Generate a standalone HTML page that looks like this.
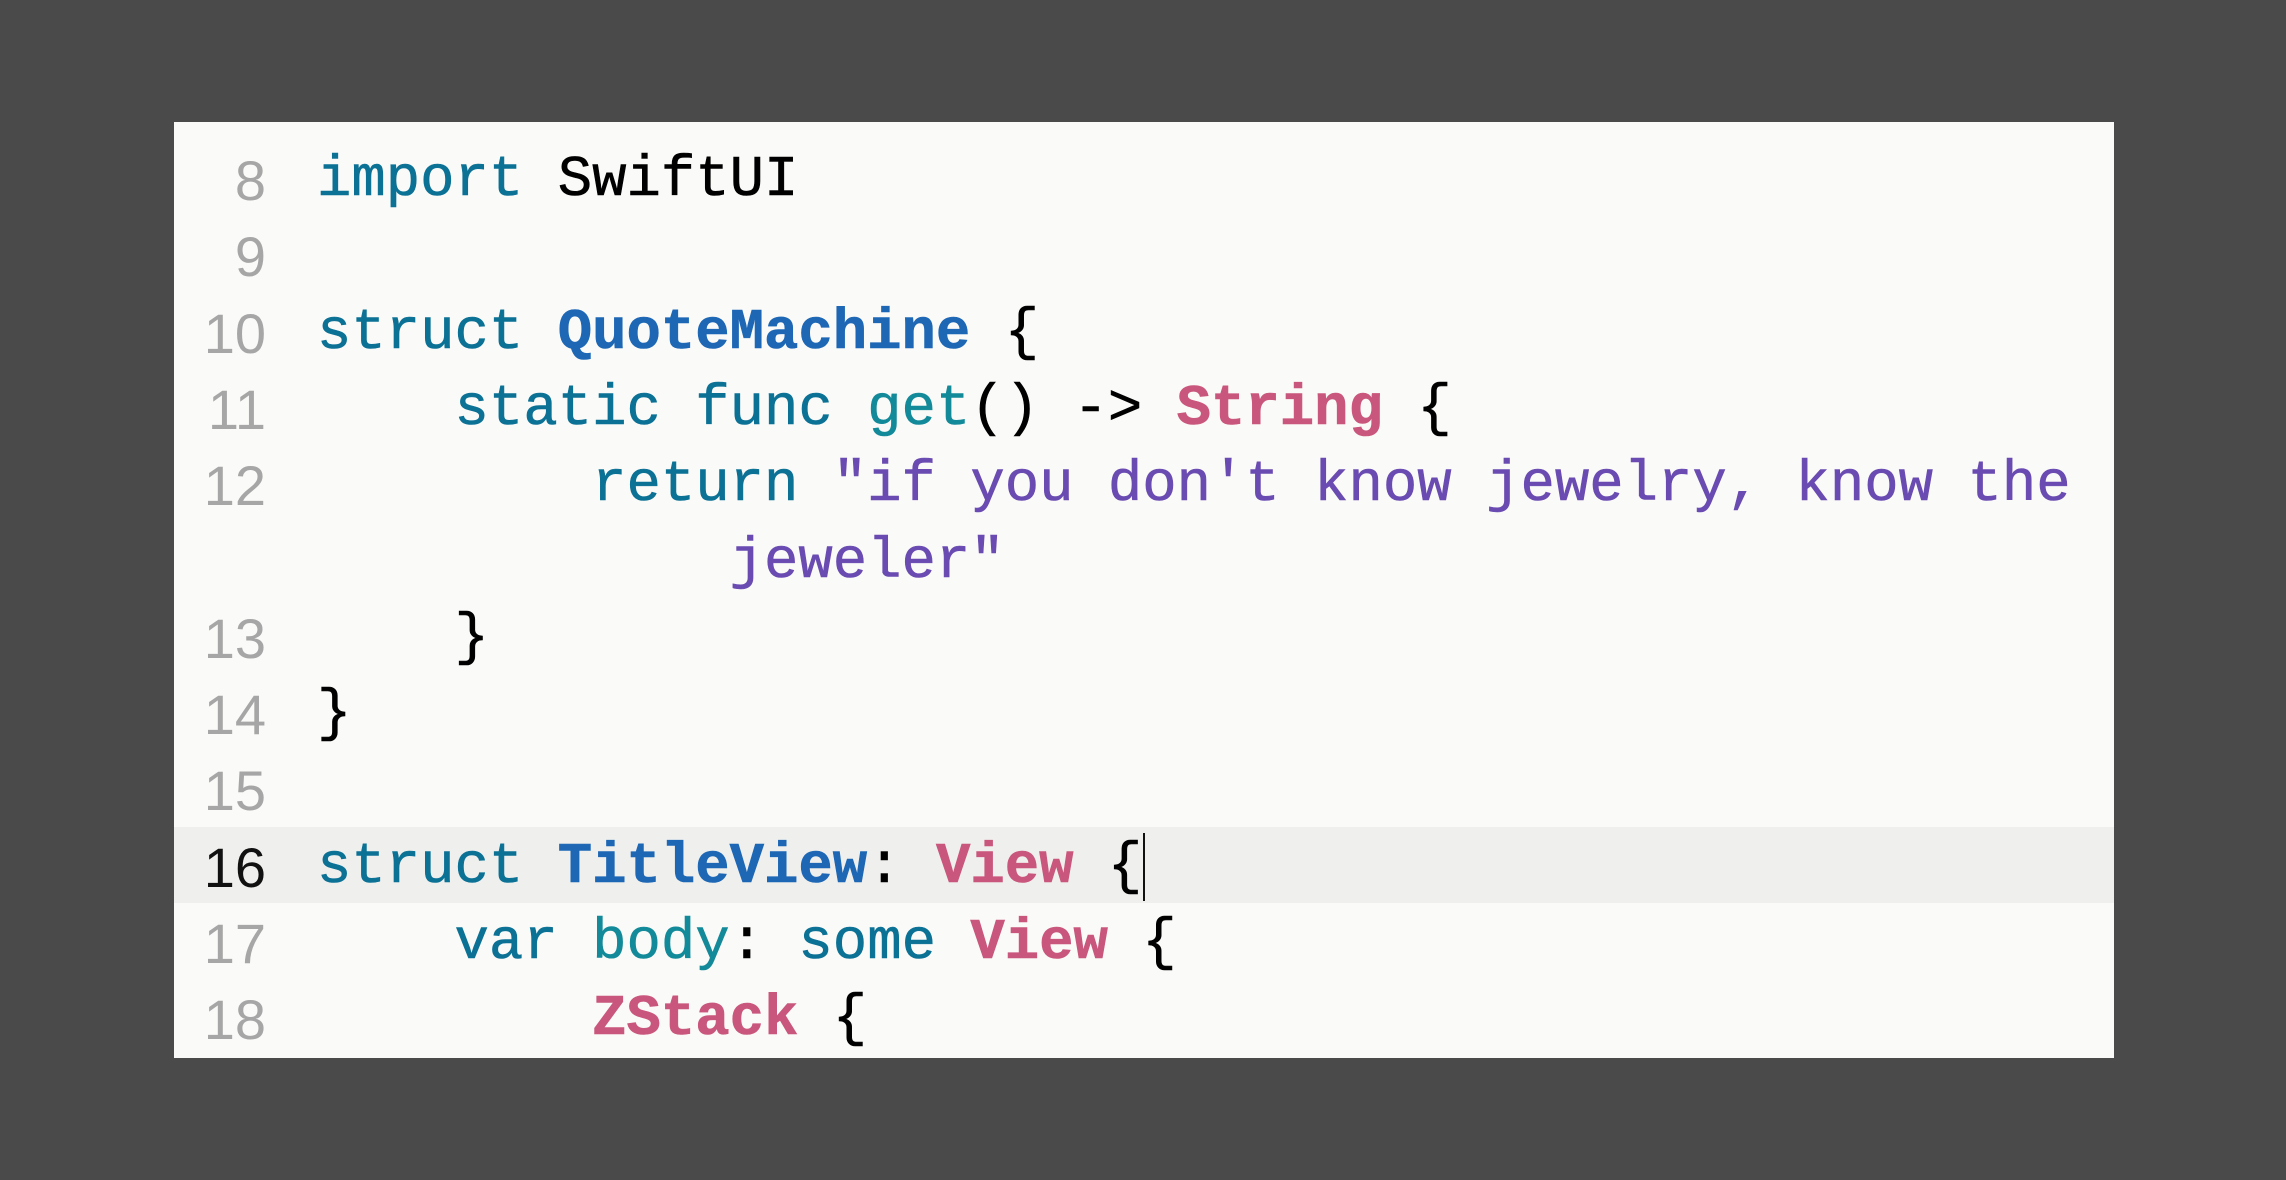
<!DOCTYPE html>
<html><head><meta charset="utf-8"><style>
html,body{margin:0;padding:0;width:2286px;height:1180px;background:#4a4a4a;overflow:hidden}
#p{position:absolute;left:174px;top:122px;width:1940px;height:936px;background:#fafaf8;overflow:hidden}
.r{position:absolute;left:0;width:1940px;height:76.3px;line-height:82px}
.n{position:absolute;left:0;width:92px;text-align:right;font-family:"Liberation Sans",sans-serif;font-size:56px;color:#a6a6a6}
.c{position:absolute;left:143px;white-space:pre;font-family:"Liberation Mono",monospace;font-size:57.3px;color:#000;-webkit-text-stroke:0.6px currentColor}
.k{color:#0b7195}.t{color:#1d67b5;font-weight:bold}.p{color:#c9567c;font-weight:bold}.f{color:#138a99}.s{color:#6a4bb1}
.hl{background:#efefed}
</style></head><body><div id="p">
<div class="r" style="top:18px"><span class="n">8</span><span class="c"><span class="k">import</span> SwiftUI</span></div>
<div class="r" style="top:94.3px"><span class="n">9</span></div>
<div class="r" style="top:170.6px"><span class="n">10</span><span class="c"><span class="k">struct</span> <span class="t">QuoteMachine</span> {</span></div>
<div class="r" style="top:246.9px"><span class="n">11</span><span class="c">    <span class="k">static func</span> <span class="f">get</span>() -&gt; <span class="p">String</span> {</span></div>
<div class="r" style="top:323.2px"><span class="n">12</span><span class="c">        <span class="k">return</span> <span class="s">"if you don't know jewelry, know the</span></span></div>
<div class="r" style="top:399.5px"><span class="c">            <span class="s">jeweler"</span></span></div>
<div class="r" style="top:475.8px"><span class="n">13</span><span class="c">    }</span></div>
<div class="r" style="top:552.1px"><span class="n">14</span><span class="c">}</span></div>
<div class="r" style="top:628.4px"><span class="n">15</span></div>
<div class="r hl" style="top:705px"><span class="n" style="color:#111">16</span><span class="c"><span class="k">struct</span> <span class="t">TitleView</span>: <span class="p">View</span> {<span style="display:inline-block;width:2px;height:68px;background:#111;vertical-align:middle;margin-left:1px"></span></span></div>
<div class="r" style="top:781px"><span class="n">17</span><span class="c">    <span class="k">var</span> <span class="f">body</span>: <span class="k">some</span> <span class="p">View</span> {</span></div>
<div class="r" style="top:857.3px"><span class="n">18</span><span class="c">        <span class="p">ZStack</span> {</span></div>
</div></body></html>
